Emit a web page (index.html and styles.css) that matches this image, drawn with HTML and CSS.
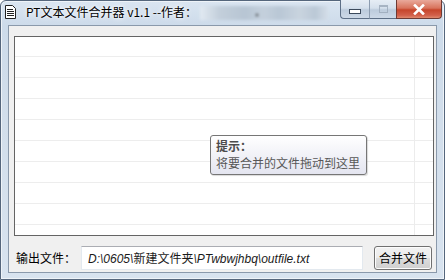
FILE: index.html
```html
<!DOCTYPE html>
<html>
<head>
<meta charset="utf-8">
<link rel="stylesheet" href="styles.css">
</head>
<body>
<div class="window">
  <div class="titlebar">
    <svg class="app-icon" width="11" height="14" viewBox="0 0 11 14">
      <path d="M0.5 0.5 H7.5 L10.5 3.5 V13.5 H0.5 Z" fill="#fff" stroke="#222"/>
      <path d="M2 4.5 H8 M2 6.5 H9 M2 8.5 H9 M2 10.5 H9" stroke="#222" stroke-width="1"/>
    </svg>
    <span class="title">PT文本文件合并器 v1.1 --作者：</span>
    <div class="blur"><span class="dot"></span></div>
    <div class="spacer"></div>
    <div class="controls">
      <div class="cbtn min"><span class="min-glyph"></span></div>
      <div class="cbtn max"><span class="max-glyph"></span></div>
      <div class="cbtn close">
        <svg width="14" height="11" viewBox="0 0 14 11"><path d="M3 1.5 L11 9.5 M11 1.5 L3 9.5" stroke="#fff" stroke-width="2.6" stroke-linecap="square"/></svg>
      </div>
    </div>
  </div>
  <div class="client">
    <div class="listbox">
      <div class="tooltip">
        <div class="tip-title">提示：</div>
        <div class="tip-text">将要合并的文件拖动到这里</div>
      </div>
    </div>
    <div class="bottom">
      <span class="label">输出文件：</span>
      <div class="input">D:\0605\<span class="cjk">新建文件夹</span>\PTwbwjhbq\outfile.txt</div>
      <div class="button">合并文件</div>
    </div>
  </div>
</div>
</body>
</html>
```

FILE: styles.css
```css
html, body {
  margin: 0;
  padding: 0;
}
body {
  width: 445px;
  height: 280px;
  overflow: hidden;
  font-family: "Noto Sans CJK SC", "Noto Sans", sans-serif;
  font-size: 12px;
}
.window {
  box-sizing: border-box;
  width: 445px;
  height: 280px;
  background: linear-gradient(to bottom, #dae5f1 0px, #cddbea 24px, #d2deeb 120px, #d8e3ef 280px);
  border: 1px solid #55667c;
  border-radius: 6px 6px 0 0;
  box-shadow: inset 0 0 0 1px #eef3f8;
  display: flex;
  flex-direction: column;
}
.titlebar {
  height: 23px;
  display: flex;
  align-items: flex-start;
  padding-left: 4px;
}
.app-icon {
  margin-top: 4px;
  flex: none;
}
.title {
  margin-left: 10px;
  margin-top: 3px;
  font-size: 12px;
  line-height: 16px;
  color: #000;
  white-space: nowrap;
  text-shadow: 0 0 6px #fff, 0 0 3px #fff;
}
.blur {
  position: relative;
  margin-left: 3px;
  margin-top: 5px;
  width: 128px;
  height: 14px;
  background: linear-gradient(to right, #e2eaf2 0, #c3cfdb 15%, #b7c5d3 35%, #c4d0dc 50%, #b9c7d5 62%, #c9d4df 78%, #bac8d6 90%, #d4dee8 100%);
  filter: blur(1.5px);
}
.dot {
  position: absolute;
  left: 56px;
  top: 8px;
  width: 2px;
  height: 2px;
  background: #222;
}
.spacer {
  flex: 1;
}
.controls {
  display: flex;
  margin-right: 2px;
  margin-top: -1px;
}
.cbtn {
  box-sizing: border-box;
  height: 19px;
  border: 1px solid #5d6f86;
  border-top: none;
  display: flex;
  align-items: center;
  justify-content: center;
}
.min {
  width: 29px;
  border-radius: 0 0 0 4px;
  background: linear-gradient(to bottom, #e6edf5 0%, #d5e0ec 45%, #bccbdc 55%, #cdd9e7 100%);
  border-right: none;
}
.max {
  width: 27px;
  background: linear-gradient(to bottom, #e6edf5 0%, #d5e0ec 45%, #bccbdc 55%, #cdd9e7 100%);
  border-right: none;
  border-left: 1px solid #8c9cb0;
}
.close {
  width: 46px;
  border-radius: 0 0 4px 0;
  background: linear-gradient(to bottom, #e9a99b 0%, #d8735c 45%, #c6452b 55%, #d2604a 85%, #e08a6e 100%);
  border-color: #6e3a33;
}
.min-glyph {
  display: block;
  width: 10px;
  height: 3px;
  margin-top: 5px;
  background: #fff;
  border: 1px solid #3c4a5c;
}
.max-glyph {
  display: block;
  width: 7px;
  height: 5px;
  border: 1px solid #9aa8b8;
  border-top-width: 2px;
  opacity: 0.8;
}
.client {
  margin: 1px 7px 6px 7px;
  flex: 1;
  background: #f0f0f0;
  border: 1px solid #8a99ab;
  padding: 10px 4px 0 5px;
  display: flex;
  flex-direction: column;
}
.listbox {
  position: relative;
  box-sizing: border-box;
  width: 420px;
  height: 200px;
  border: 1px solid #646464;
  background-color: #fff;
  background-image:
    linear-gradient(to right, transparent 399px, #ececec 399px, #ececec 400px, transparent 400px),
    repeating-linear-gradient(to bottom, transparent 0px, transparent 19px, #ededed 19px, #ededed 20px, transparent 20px, transparent 21px);
}
.tooltip {
  position: absolute;
  left: 195px;
  top: 98px;
  box-sizing: border-box;
  width: 157px;
  height: 40px;
  border: 1px solid #767676;
  border-radius: 3px;
  background: linear-gradient(to bottom, #ffffff 0%, #e4e5f0 100%);
  padding: 1px 0 0 5px;
  box-shadow: 1px 1px 1px rgba(0,0,0,0.15);
}
.tip-title {
  font-weight: bold;
  color: #4c4c4c;
  line-height: 17px;
}
.tip-text {
  color: #575757;
  line-height: 18px;
}
.bottom {
  margin-top: 9px;
  display: flex;
  align-items: center;
  height: 25px;
}
.label {
  margin-left: 2px;
  color: #000;
  width: 65px;
  white-space: nowrap;
}
.input {
  box-sizing: border-box;
  width: 282px;
  height: 24px;
  background: #fff;
  border: 1px solid #e3e9ef;
  border-top-color: #abadb3;
  padding-left: 6px;
  font-family: "Liberation Sans", "Noto Sans CJK SC", sans-serif;
  font-style: italic;
  font-size: 12px;
  line-height: 22px;
  color: #1a1a1a;
  white-space: nowrap;
  overflow: hidden;
}
.cjk {
  font-family: "Noto Sans CJK SC", sans-serif;
  font-style: normal;
}
.button {
  box-sizing: border-box;
  margin-left: 11px;
  width: 58px;
  height: 24px;
  border: 1px solid #707070;
  border-radius: 3px;
  background: linear-gradient(to bottom, #f2f2f2 0%, #ebebeb 50%, #dddddd 51%, #cfcfcf 100%);
  box-shadow: inset 0 0 0 1px #fcfcfc;
  display: flex;
  align-items: center;
  justify-content: center;
  color: #000;
}
```
